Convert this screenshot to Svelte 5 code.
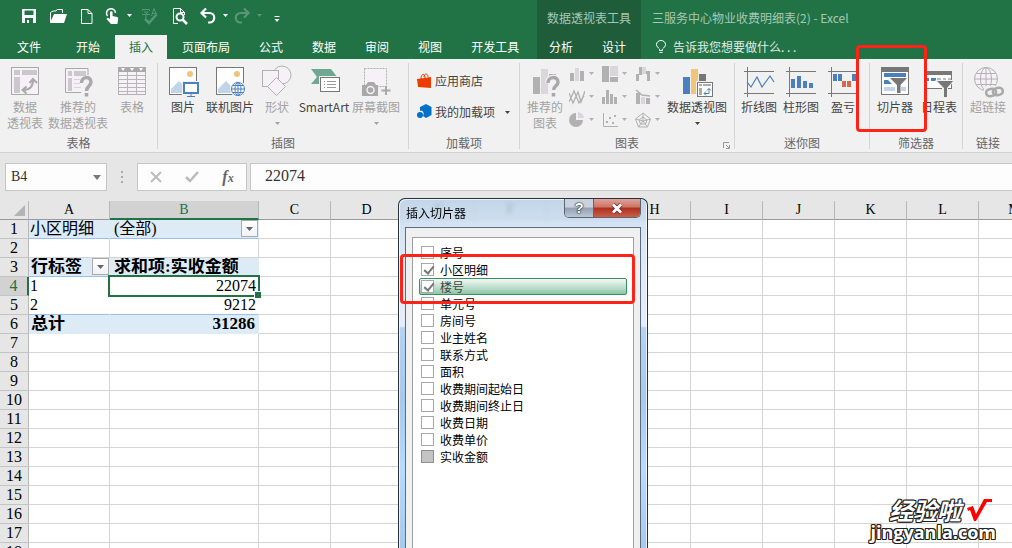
<script lang="ts">
  type Cell = { text?: string; cls?: string; filter?: boolean };

  const quickAccess = [
    { icon: 'save', label: '保存', w: 28 },
    { icon: 'open', label: '打开', w: 30 },
    { icon: 'new', label: '新建', w: 27 },
    { icon: 'touch', label: '触摸/鼠标模式', w: 24 },
    { icon: 'caret', label: '模式选项', w: 10 },
    { icon: 'spell', label: '拼写检查', w: 32, off: true },
    { icon: 'preview', label: '打印预览', w: 28 },
    { icon: 'undo', label: '撤消', w: 28 },
    { icon: 'caret', label: '撤消列表', w: 6 },
    { icon: 'redo', label: '恢复', w: 28, off: true },
    { icon: 'caret', label: '恢复列表', w: 6, off: true },
    { icon: 'customize', label: '自定义快速访问工具栏', w: 30 },
  ];

  const tabs = ['开始', '插入', '页面布局', '公式', '数据', '审阅', '视图', '开发工具'];
  const contextTabs = ['分析', '设计'];
  let activeTab = $state('插入');

  const miniCharts = ['column', 'treemap', 'waterfall', 'line', 'histogram', 'combo', 'pie', 'scatter', 'radar'];

  const columns = 'ABCDEFGHIJKLM'.split('');
  const rows = Array.from({ length: 18 }, (_, i) => i + 1);

  const cells: Record<string, Cell> = {
    A1: { text: '小区明细', cls: 'fill rule' },
    B1: { text: '(全部)', cls: 'fill rule indent', filter: true },
    A3: { text: '行标签', cls: 'fill rule bold', filter: true },
    B3: { text: '求和项:实收金额', cls: 'fill rule bold indent' },
    A4: { text: '1', cls: 'plain' },
    B4: { text: '22074', cls: 'plain num active' },
    A5: { text: '2', cls: 'plain rule' },
    B5: { text: '9212', cls: 'plain num rule' },
    A6: { text: '总计', cls: 'fill bold' },
    B6: { text: '31286', cls: 'fill bold num' },
  };

  let cellName = $state('B4');
  let formula = $state('22074');

  let fields = $state([
    { name: '序号', checked: false },
    { name: '小区明细', checked: true },
    { name: '楼号', checked: true },
    { name: '单元号', checked: false },
    { name: '房间号', checked: false },
    { name: '业主姓名', checked: false },
    { name: '联系方式', checked: false },
    { name: '面积', checked: false },
    { name: '收费期间起始日', checked: false },
    { name: '收费期间终止日', checked: false },
    { name: '收费日期', checked: false },
    { name: '收费单价', checked: false },
    { name: '实收金额', checked: false, disabled: true },
  ]);
  let selected = $state('楼号');
</script>

{#snippet caret()}
  <svg class="caret" width="5" height="3" viewBox="0 0 5 3"><path d="M0 0h5L2.5 3z" fill="currentColor" /></svg>
{/snippet}

{#snippet qatIcon(name: string)}
  {#if name === 'caret'}
    {@render caret()}
  {:else}
    <svg width="18" height="18" viewBox="0 0 18 18" fill="none" stroke="currentColor">
      {#if name === 'save'}
        <path d="M2 2h14v14H2z M4.500 3.500v4.500h9V3.500z M5 11v5h2v-3h2v3h4v-5z" fill="currentColor" fill-rule="evenodd" stroke="none" />
      {:else if name === 'open'}
        <path d="M1.500 15V5.500L4 4h3l1-1.500h5.500V6" />
        <path d="M1 16L5 7h13l-3 9z" fill="currentColor" stroke="none" />
      {:else if name === 'new'}
        <path d="M3.500 2.500h6.500l4 4v10H3.500z M10 2.500v4h4" />
      {:else if name === 'touch'}
        <path d="M4.500 9a4.500 4.500 0 1 1 8-3" stroke-width="1.500" />
        <path d="M7 5.500a1.300 1.300 0 0 1 2.600 0V9l4.400 1c1 .3 1.400 1 1.200 2l-.8 5H8L3.500 12c.8-1.300 2-1.200 3.500 0z" fill="currentColor" stroke="none" />
      {:else if name === 'spell'}
        <path d="M1.500 4V2.500h7V4M3 5h4L5 7v3.500H4M1 7.500h8M10.500 9L13 1.500 16 9M11.500 6.500h4" />
        <path d="M4 12l4 4 7-8" stroke-width="2.500" />
      {:else if name === 'preview'}
        <path d="M7 16.500H2.500v-15h7l4 4V8M9.500 1.500v4h4" />
        <circle cx="9" cy="10" r="3.500" stroke-width="2" />
        <path d="M11.500 12.500L16 17" stroke-width="2.500" />
      {:else if name === 'undo'}
        <path d="M7 1.500L2.500 6 7 10.500M3 6h7.500a4.700 4.700 0 0 1 0 9.500H9" stroke-width="2.200" />
      {:else if name === 'redo'}
        <path d="M11 1.500L15.500 6 11 10.500M15 6H7.500a4.700 4.700 0 0 0 0 9.500H9" stroke-width="2.200" />
      {:else if name === 'customize'}
        <path d="M6.500 9.500h5" /><path d="M6.500 12h5L9 15z" fill="currentColor" stroke="none" />
      {/if}
    </svg>
  {/if}
{/snippet}

{#snippet bigIcon(name: string)}
  <svg class="big-icon" width="32" height="32" viewBox="0 0 32 32" fill="none">
    {#if name === 'pivot'}
      <rect x="2.500" y="2.500" width="27" height="27" fill="#f6f1f6" stroke="#a9a9a9" />
      <path d="M5 5h6v5H5zM13 5h15v5H13zM5 12h6v16H5z" fill="#cbc8cb" />
      <path d="M14 25c6 0 10-3 10-10M20.500 18l3.500-4 4 4M17.500 21.500L13.500 25l4 3.500" stroke="#a9a9a9" stroke-width="2" />
    {:else if name === 'recPivot'}
      <path d="M26 10V3.500H3.500v24H19" fill="#f6f1f6" stroke="#a9a9a9" />
      <path d="M6 6h4v5H6zM12 6h12v5H12zM6 13h4v13H6z" fill="#cbc8cb" />
      <path d="M12 14.500h6M12 18.500h6M12 22.500h7" stroke="#d8d5d8" stroke-width="1" />
      <path d="M19.500 18c0-7 9.500-7 9.500-1 0 4-4.500 4-4.500 9M24.500 28v3.500" stroke="#a9a9a9" stroke-width="3.500" />
    {:else if name === 'table'}
      <rect x="2.500" y="2.500" width="27" height="27" fill="#f6f1f6" stroke="#b1b1b1" />
      <path d="M2 2h28v5H2z" fill="#a9a9a9" />
      <path d="M5 3h4L7 6zM14 3h4l-2 3zM23 3h4l-2 3z" fill="#fff" />
      <path d="M3 10.500h26M3 14.500h26M3 18.500h26M3 22.500h26M3 26.500h26M11.500 7v22M20.500 7v22" stroke="#b9b6b9" />
    {:else if name === 'picture' || name === 'online'}
      <rect x="2.500" y="2.500" width="27" height="27" fill="#fff" stroke="#777" />
      <path d="M4 28V24l8-8 5 5 2-1v8z" fill="#c0d4ea" />
      <circle cx="23" cy="9" r="3" fill="#eec57a" />
      {#if name === 'picture'}
        <path d="M15 16h17v16H15z" fill="#f1f1f1" />
        <rect x="17" y="18" width="14" height="10" fill="#fff" stroke="#4a80bb" stroke-width="2" />
        <path d="M24 28v3M20 31.500h8" stroke="#4a80bb" />
      {:else}
        <circle cx="24" cy="24" r="8" fill="#f1f1f1" />
        <circle cx="24" cy="24" r="6.500" fill="#fff" stroke="#4a80bb" />
        <path d="M17.500 24h13M19 20.500h10M19 27.500h10M24 17.500v13" stroke="#4a80bb" />
        <ellipse cx="24" cy="24" rx="3" ry="6.500" stroke="#4a80bb" />
      {/if}
    {:else if name === 'shapes'}
      <circle cx="21" cy="10" r="9" fill="#f6f1f6" stroke="#b1b1b1" />
      <rect x="1.500" y="5.500" width="16" height="16" fill="#f6f1f6" stroke="#b1b1b1" />
      <path d="M15.500 12.500l9 9-9 9-9-9z" fill="#f6f1f6" stroke="#b1b1b1" />
    {:else if name === 'smartart'}
      <path d="M3 4h20l7 9-5 6H3l6-7z" fill="#6fa793" />
      <rect x="11" y="11" width="21" height="17" fill="#f1f1f1" />
      <rect x="12.500" y="12.500" width="19" height="14" fill="#fff" stroke="#777" />
      <path d="M16 16.500h1M16 19.500h1M16 22.500h1M19 16.500h9M19 19.500h9M19 22.500h9" stroke="#999" />
    {:else if name === 'screenshot'}
      <path d="M4.500 3.500h22v18h-22z" fill="#f6f1f6" stroke="#b1b1b1" stroke-dasharray="2 1" />
      <path d="M2 20h4l2-3h6l2 3h2v11H2z" fill="#a9a9a9" />
      <circle cx="10.500" cy="25" r="3.500" stroke="#f1f1f1" stroke-width="1.500" />
      <path d="M26 21v9M21.500 25.500h9" stroke="#a9a9a9" stroke-width="2" />
    {:else if name === 'recChart'}
      <path d="M4 12h7v17H4z" fill="#b1b1b1" /><path d="M12 4h7v25h-7z" fill="#dbd6db" /><path d="M20 9h7v5h-7z" fill="#b1b1b1" />
      <path d="M19 18c0-7 10-7 10-1 0 4-4.500 4-4.500 8M24.500 27.500V32" stroke="#f1f1f1" stroke-width="6" />
      <path d="M19 18c0-7 10-7 10-1 0 4-4.500 4-4.500 8M24.500 28v3.500" stroke="#a9a9a9" stroke-width="3.500" />
    {:else if name === 'pivotChart'}
      <path d="M2 12h7v17H2z" fill="#4a80bb" /><path d="M10 4h7v25h-7z" fill="#eec57a" /><path d="M18 9h7v7h-7z" fill="#777" />
      <rect x="15" y="16" width="17" height="17" fill="#f1f1f1" />
      <rect x="16.500" y="17.500" width="15" height="14" fill="#fff" stroke="#777" />
      <path d="M18 19h3v2h-3zM22 19h8v2h-8zM18 23h3v7h-3z" fill="#aaa" />
      <path d="M23 28.500h5v-5M26 25.500l2-2 2 2M25 26.500l-2 2 2 2" stroke="#4a80bb" />
    {:else if name === 'sparkLine' || name === 'sparkColumn' || name === 'sparkWin'}
      <path d="M1 6.500h30M1 28.500h30M4.500 2v30" stroke="#777" />
      {#if name === 'sparkLine'}
        <path d="M4 17l4 5 6-10 5 10 8-11 4 6" stroke="#4a80bb" stroke-width="1.200" />
      {:else if name === 'sparkColumn'}
        <path d="M6 14h4v9H6zM12 11h4v12h-4zM18 16h4v7h-4zM24 18h4v5h-4z" fill="#4a80bb" />
      {:else}
        <path d="M6 9h4v7H6zM11 9h4v7h-4zM25 9h4v7h-4z" fill="#4a80bb" />
        <path d="M15 16h4v6h-4zM20 16h4v6h-4z" fill="#d9664c" />
      {/if}
    {:else if name === 'slicer'}
      <rect x="2.500" y="2.500" width="27" height="27" fill="#fff" stroke="#777" />
      <path d="M2 2h28v5H2z" fill="#777" />
      <path d="M5 8h22v4H5zM5 15h10v4H5z" fill="#4a80bb" /><path d="M5 22h22v4H5z" fill="#c0d4ea" />
      <path d="M9 12h20v3l-7 7v7h-6v-7l-7-7z" fill="#fff" />
      <path d="M11 13h17l-6.500 7v8H18v-8z" fill="#777" />
    {:else if name === 'timeline'}
      <rect x="1.500" y="6.500" width="27" height="17" fill="#fff" stroke="#777" />
      <path d="M1 6h28v4H1z" fill="#777" />
      <path d="M3 13h3v3H3zM8 13h5v3H8z" fill="#4a80bb" /><path d="M14 13h4v3h-4zM20 13h3v3h-3zM25 13h3v3h-3z" fill="#bbb" />
      <path d="M12 15h20l-7 8v10h-6V23z" fill="#f1f1f1" />
      <path d="M14 16h16l-6 7v9h-3v-9z" fill="#777" />
    {:else if name === 'link'}
      <g stroke="#b1b1b1">
        <circle cx="14" cy="14" r="11.500" fill="#f6f1f6" />
        <path d="M2.500 14h23M4 8.500h20M4 19.500h20M14 2.500v23" /><ellipse cx="14" cy="14" rx="5.500" ry="11.500" />
      </g>
      <rect x="12" y="21" width="20" height="11" fill="#f1f1f1" />
      <rect x="14" y="24" width="10" height="7" rx="3.500" stroke="#a9a9a9" stroke-width="2.500" transform="rotate(-12 19 27)" />
      <rect x="21" y="23" width="10" height="7" rx="3.500" stroke="#a9a9a9" stroke-width="2.500" transform="rotate(-12 26 27)" />
    {/if}
  </svg>
{/snippet}

{#snippet miniIcon(name: string)}
  <svg width="16" height="16" viewBox="0 0 16 16" fill="none" stroke="#b1b1b1">
    {#if name === 'column'}
      <path d="M1 7h4v8H1zM11 5h4v10h-4z" fill="#b1b1b1" stroke="none" /><path d="M6 2h4v13H6z" fill="#dbd6db" stroke="none" />
    {:else if name === 'treemap'}
      <path d="M0 0h7v16H0z" fill="#b1b1b1" stroke="none" /><path d="M8 0h8v10H8z" fill="#dbd6db" stroke="none" /><path d="M8 11h8v5H8z" fill="#b1b1b1" stroke="none" />
    {:else if name === 'waterfall'}
      <path d="M1 8h3v7H1zM4 1h3v8H4zM11 5h4v10h-3V8h-1z" fill="#b1b1b1" stroke="none" /><path d="M7 1h4v7H7z" fill="#dbd6db" stroke="none" />
    {:else if name === 'line'}
      <path d="M0 4l4 10L9 3l3 10 4-11M0 13L5 2l5 12 5-7" stroke-width="1.300" />
    {:else if name === 'histogram'}
      <path d="M0 8h3v7H0zM4 1h3v14H4zM8 5h3v10H8zM12 8h3v7h-3z" fill="#b1b1b1" stroke="none" />
    {:else if name === 'combo'}
      <path d="M1 4h4v11H1zM11 9h4v6h-4z" fill="#b1b1b1" stroke="none" /><path d="M6 8h4v7H6z" fill="#dbd6db" stroke="none" /><path d="M1 1l6 5 8 1" stroke-width="1.500" />
    {:else if name === 'pie'}
      <path d="M7 1v7h7a7 7 0 1 1-7-7z" fill="#b1b1b1" stroke="none" /><path d="M9 0a7 7 0 0 1 6 6H9z" fill="#dbd6db" stroke="none" />
    {:else if name === 'scatter'}
      <path d="M1.500 1v13.500H16" /><path d="M4 9h2v2H4zM7 5h2v2H7zM10 10h2v2h-2zM12 3h2v2h-2z" fill="#b1b1b1" stroke="none" />
    {:else if name === 'radar'}
      <path d="M8 1l7.500 6-3 8h-9l-3-8zM8 5l4 3-1.500 4h-5L4 8zM8 1v8M.5 7L8 9l7.500-2M3.500 15L8 9l4.500 6" />
    {/if}
  </svg>
{/snippet}

{#snippet big(icon: string, lines: string[], width: string, off = false, drop = false)}
  <button class="big {width}" class:off>
    {@render bigIcon(icon)}
    {#each lines as line}
      <span>{line}</span>
    {/each}
    {#if drop}
      <span class="drop">{@render caret()}</span>
    {/if}
  </button>
{/snippet}

<div class="app">
  <header>
    <div class="head-main">
      <div class="qat">
        {#each quickAccess as item}
          <button class="qat-btn" class:off={item.off} style="width: {item.w}px" aria-label={item.label}>
            {@render qatIcon(item.icon)}
          </button>
        {/each}
      </div>
      <nav class="tabs">
        <button class="tab tab--file">文件</button>
        {#each tabs as tab}
          <button class="tab" class:active={tab === activeTab} onclick={() => (activeTab = tab)}>{tab}</button>
        {/each}
      </nav>
    </div>
    <div class="head-context">
      <div class="context-title">数据透视表工具</div>
      <nav class="tabs">
        {#each contextTabs as tab}
          <button class="tab" class:active={tab === activeTab} onclick={() => (activeTab = tab)}>{tab}</button>
        {/each}
      </nav>
    </div>
    <div class="head-right">
      <div class="doc-title">三服务中心物业收费明细表(2) - Excel</div>
      <label class="tell-me">
        <svg width="10" height="14" viewBox="0 0 10 14" fill="none" stroke="#fff">
          <path d="M3.500 10.500V9C2 7.500.5 6.500.5 4.500a4.500 4 0 0 1 9 0c0 2-1.500 3-3 4.500v1.500zM3.500 12.500h3" />
        </svg>
        <input type="text" aria-label="告诉我" placeholder="告诉我您想要做什么. . ." />
      </label>
    </div>
  </header>

  <div class="ribbon">
    <section class="group group--tables">
      <div class="group-body">
        {@render big('pivot', ['数据', '透视表'], 'w44', true)}
        {@render big('recPivot', ['推荐的', '数据透视表'], 'w62', true)}
        {@render big('table', ['表格'], 'w46', true)}
      </div>
      <div class="group-label">表格</div>
    </section>
    <section class="group group--illus">
      <div class="group-body">
        {@render big('picture', ['图片'], 'w36')}
        {@render big('online', ['联机图片'], 'w58')}
        {@render big('shapes', ['形状'], 'w36', true, true)}
        {@render big('smartart', ['SmartArt'], 'w58')}
        {@render big('screenshot', ['屏幕截图'], 'w46', true, true)}
      </div>
      <div class="group-label">插图</div>
    </section>
    <section class="group group--addins">
      <div class="group-body addins">
        <button class="small">
          <svg width="16" height="16" viewBox="0 0 16 16" fill="none">
            <path d="M0 6l14-2v11L1 14z" fill="#eb3c00" /><path d="M4 6c0-6 4-6 4-1M7 4c0-4 4-4 4 0" stroke="#eb3c00" />
          </svg>
          应用商店
        </button>
        <button class="small">
          <svg width="16" height="16" viewBox="0 0 16 16">
            <path d="M9 0l5.500 3v8L9 14l-3-2c2-4-1-6-3-5V3z" fill="#0072c6" /><circle cx="3" cy="11" r="3" fill="#0072c6" />
          </svg>
          我的加载项
          {@render caret()}
        </button>
      </div>
      <div class="group-label">加载项</div>
    </section>
    <section class="group group--charts">
      <div class="group-body">
        {@render big('recChart', ['推荐的', '图表'], 'w44', true)}
        <div class="mini-grid">
          {#each miniCharts as chart}
            <button class="mini" aria-label={chart}>{@render miniIcon(chart)}{@render caret()}</button>
          {/each}
        </div>
        {@render big('pivotChart', ['数据透视图'], 'w58', false, true)}
      </div>
      <div class="group-label">图表</div>
      <button class="launcher" aria-label="图表选项">
        <svg width="7" height="7" viewBox="0 0 7 7" fill="none" stroke="#999"><path d="M.5 6V.5H6M3 3l3 3M6.500 3v3.500H3" /></svg>
      </button>
    </section>
    <section class="group group--spark">
      <div class="group-body">
        {@render big('sparkLine', ['折线图'], 'w42')}
        {@render big('sparkColumn', ['柱形图'], 'w42')}
        {@render big('sparkWin', ['盈亏'], 'w42')}
      </div>
      <div class="group-label">迷你图</div>
    </section>
    <section class="group group--filters">
      <div class="group-body">
        {@render big('slicer', ['切片器'], 'w44')}
        {@render big('timeline', ['日程表'], 'w44')}
      </div>
      <div class="group-label">筛选器</div>
    </section>
    <section class="group group--links">
      <div class="group-body">
        {@render big('link', ['超链接'], 'w44', true)}
      </div>
      <div class="group-label">链接</div>
    </section>
  </div>

  <div class="formula-bar">
    <div class="name-box">
      <input type="text" aria-label="名称框" bind:value={cellName} />
      <button aria-label="名称列表"><svg width="8" height="5" viewBox="0 0 8 5"><path d="M0 0h8L4 5z" fill="#777" /></svg></button>
    </div>
    <svg class="grip" width="2" height="12" viewBox="0 0 2 12"><path d="M0 0h2v2H0zM0 5h2v2H0zM0 10h2v2H0z" fill="#aaa" /></svg>
    <div class="edit-btns">
      <button aria-label="取消">
        <svg width="12" height="12" viewBox="0 0 12 12" fill="none" stroke="#bbb" stroke-width="2"><path d="M1 1l10 10M11 1L1 11" /></svg>
      </button>
      <button aria-label="输入">
        <svg width="14" height="12" viewBox="0 0 14 12" fill="none" stroke="#bbb" stroke-width="2.500"><path d="M1 6l4 4 8-9" /></svg>
      </button>
      <button class="fx" aria-label="插入函数"><i>f<small>x</small></i></button>
    </div>
    <input class="formula" type="text" aria-label="编辑栏" bind:value={formula} />
  </div>

  <main class="sheet">
    <table>
      <colgroup>
        <col class="col-head" />
        {#each columns as c}
          <col class="col-{c === 'A' || c === 'B' ? c : 'x'}" />
        {/each}
      </colgroup>
      <thead>
        <tr>
          <th class="corner" aria-label="全选">
            <svg width="11" height="11" viewBox="0 0 11 11"><path d="M11 0v11H0z" fill="#b4b4b4" /></svg>
          </th>
          {#each columns as c}
            <th class:current={c === 'B'}>{c}</th>
          {/each}
        </tr>
      </thead>
      <tbody>
        {#each rows as r}
          <tr>
            <th class:current={r === 4}>{r}</th>
            {#each columns as c}
              {@const cell = cells[c + r]}
              <td class={cell?.cls}>
                {#if cell?.filter}
                  <div class="with-filter">
                    {cell.text}
                    <button class="filter" aria-label="筛选">
                      <svg width="7" height="4" viewBox="0 0 7 4"><path d="M0 0h7L3.500 4z" fill="#666" /></svg>
                    </button>
                  </div>
                {:else}
                  {cell?.text ?? ''}
                {/if}
              </td>
            {/each}
          </tr>
        {/each}
      </tbody>
    </table>
  </main>

  <div class="dialog" role="dialog" aria-label="插入切片器">
    <div class="dialog-head">
      <h2>插入切片器</h2>
      <div class="win-btns">
        <button class="help" aria-label="帮助">?</button>
        <button class="close" aria-label="关闭">
          <svg width="14" height="11" viewBox="0 0 14 11" fill="none">
            <path d="M3 1.500l8 8M11 1.500l-8 8" stroke="#6b3030" stroke-width="4.500" />
            <path d="M3 1.500l8 8M11 1.500l-8 8" stroke="#fff" stroke-width="2.800" />
          </svg>
        </button>
      </div>
    </div>
    <div class="dialog-body">
      <div class="field-list">
        {#each fields as field}
          <label class:selected={field.name === selected}>
            <input
              type="checkbox"
              bind:checked={field.checked}
              disabled={field.disabled}
              onchange={() => (selected = field.name)}
            />
            {field.name}
          </label>
        {/each}
      </div>
    </div>
  </div>

  <div class="mark mark--slicer"></div>
  <div class="mark mark--fields"></div>

  <div class="watermark">
    <div class="wm-top">
      经验啦
      <svg width="26" height="24" viewBox="0 0 26 24" fill="#f00"><path d="M1 10l6-2 3 8L18 1h8v3h-5L10 23H8L4 12l-2 1z" /></svg>
    </div>
    <div class="wm-url">jingyanla.com</div>
  </div>
</div>

<style>
  :global(body) {
    overflow: hidden;
  }

  .app {
    position: relative;
    display: flex;
    flex-direction: column;
    height: 100vh;
    overflow: hidden;
    background: #e6e6e6;
    color: #444;
    font: 12px/16px "Noto Sans CJK SC", sans-serif;
  }

  .app * { box-sizing: border-box; }

  button, input {
    font: inherit;
    color: inherit;
    background: none;
    border: none;
    padding: 0;
    margin: 0;
    outline: none;
  }

  svg { flex-shrink: 0; }

  /* title bar and tabs */
  header {
    display: flex;
    flex-shrink: 0;
    background: #217346;
    color: #fff;
  }

  .head-main, .head-context, .head-right {
    display: flex;
    flex-direction: column;
  }

  .head-main { width: 537px; }
  .head-context { width: 104px; background: #1e5c3a; }
  .head-right { flex: 1; padding-left: 11px; }

  .qat, .context-title, .doc-title {
    height: 35px;
  }

  .qat {
    display: flex;
    padding: 0 0 4px 15px;
  }

  .qat-btn {
    display: flex;
    align-items: center;
    justify-content: center;
  }

  .qat-btn.off { opacity: 0.25; }

  .context-title, .doc-title {
    line-height: 36px;
    color: #a6c7b5;
    white-space: nowrap;
  }

  .context-title { text-align: center; }

  .tabs {
    display: flex;
    gap: 1px;
    height: 24px;
  }

  .tab {
    padding: 0 14px;
    white-space: nowrap;
  }

  .tab--file { padding: 0 20px 0 17px; }

  .head-context .tab { padding: 0 16px 0 12px; }

  .tab.active {
    background: #f1f1f1;
    color: #217346;
  }

  .tell-me {
    display: flex;
    align-items: center;
    gap: 7px;
    height: 24px;
    padding-left: 4px;
  }

  .tell-me input { flex: 1; }
  .tell-me input::placeholder { color: #e0ece5; opacity: 1; }

  /* ribbon */
  .ribbon {
    display: flex;
    flex-shrink: 0;
    padding: 4px 0 3px;
    background: #f1f1f1;
    border-bottom: 1px solid #d2d2d2;
  }

  .group {
    position: relative;
    display: flex;
    flex-direction: column;
    flex-shrink: 0;
    border-right: 1px solid #d5d5d5;
  }

  .group--tables { width: 158px; }
  .group--illus { width: 251px; }
  .group--addins { width: 111px; }
  .group--charts { width: 215px; }
  .group--spark { width: 135px; }
  .group--filters { width: 93px; }
  .group--links { width: 50px; border-right: none; }

  .group-body {
    display: flex;
    height: 72px;
    padding: 2px 0 0 3px;
  }

  .group--illus .group-body { padding-left: 7px; }

  .group-label {
    height: 14px;
    line-height: 16px;
    text-align: center;
    color: #666;
  }

  .big {
    display: flex;
    flex-direction: column;
    align-items: center;
    flex-shrink: 0;
    white-space: nowrap;
  }

  .big-icon { margin-bottom: 2px; overflow: visible; }

  .big.off { color: #a3a3a3; }

  .drop {
    display: flex;
    align-items: center;
    height: 16px;
  }

  .w36 { width: 36px; }
  .w42 { width: 42px; }
  .w44 { width: 44px; }
  .w46 { width: 46px; }
  .w58 { width: 58px; }
  .w62 { width: 62px; }

  .group-body.addins {
    flex-direction: column;
    gap: 11px;
    padding: 8px 0 0 8px;
  }

  .small {
    display: flex;
    align-items: center;
    height: 20px;
    gap: 2px;
    white-space: nowrap;
  }

  .small .caret { margin-left: 8px; }

  .mini-grid {
    display: grid;
    grid-template-columns: repeat(3, 33px);
    grid-auto-rows: 23px;
    padding-left: 2px;
    margin-top: -3px;
  }

  .mini {
    display: flex;
    align-items: center;
    gap: 4px;
    color: #b1b1b1;
  }

  .launcher {
    position: absolute;
    right: 4px;
    bottom: 0;
    line-height: 0;
  }

  /* formula bar */
  .formula-bar {
    display: flex;
    align-items: center;
    flex-shrink: 0;
    height: 48px;
    padding: 0 0 0 5px;
    font-family: "Liberation Serif", "Noto Sans CJK SC", serif;
    color: #333;
  }

  .name-box, .edit-btns, .formula {
    height: 28px;
    background: #fdfdfd;
    border: 1px solid #c6c6c6;
  }

  .name-box {
    display: flex;
    align-items: center;
    width: 102px;
    padding: 0 5px;
    font-size: 14px;
  }

  .name-box input { flex: 1; min-width: 0; }
  .name-box button { line-height: 0; }

  .grip { margin: 0 14px; }

  .edit-btns {
    display: flex;
    align-items: center;
    width: 110px;
    margin-right: 3px;
  }

  .edit-btns button {
    display: flex;
    flex: 1;
    justify-content: center;
  }

  .fx { font-size: 16px; font-weight: bold; color: #666; }
  .fx small { font-size: 12px; }

  .formula {
    flex: 1;
    min-width: 0;
    padding: 0 14px 2px;
    border-right: none;
    font-size: 16px;
  }

  /* worksheet */
  .sheet {
    flex: 1;
    min-height: 0;
    overflow: hidden;
    background: #fff;
  }

  table {
    width: 1051px;
    table-layout: fixed;
    border-spacing: 0;
    font: 16px/18px "Liberation Serif", "Noto Sans CJK SC", serif;
    color: #000;
  }

  .col-head { width: 29px; }
  .col-A { width: 81px; }
  .col-B { width: 149px; }
  .col-x { width: 72px; }

  th, td {
    height: 19px;
    padding: 0;
    overflow: hidden;
    white-space: nowrap;
  }

  th {
    font-weight: normal;
    background: #e6e6e6;
    border-right: 1px solid #b8b8b8;
    border-bottom: 1px solid #c4c4c4;
  }

  thead th { font-size: 14px; border-bottom-color: #999; }

  .corner { line-height: 0; text-align: right; vertical-align: bottom; padding: 0 3px 3px 0; }

  th.current { background: #d2d2d2; color: #217346; }
  thead th.current { border-bottom: 2px solid #217346; line-height: 17px; }
  tbody th.current { border-right: 2px solid #217346; }

  td {
    background: #fff;
    padding-left: 1px;
    border-right: 1px solid #d4d4d4;
    border-bottom: 1px solid #d4d4d4;
  }

  td.fill { background: #ddebf7; border-color: #ddebf7; }
  td.plain { border-color: #fff; }
  td.rule { border-bottom-color: #9bc2e6; }
  td.bold { font-weight: bold; font-size: 17px; padding-left: 2px; }
  td.indent { padding-left: 4px; }
  td.num { text-align: right; padding-right: 2px; }
  td.bold.num { padding-right: 3px; }

  td.active {
    position: relative;
    overflow: visible;
  }

  td.active::before {
    content: "";
    position: absolute;
    inset: -2px;
    border: 2px solid #217346;
  }

  td.active::after {
    content: "";
    position: absolute;
    right: -3px;
    bottom: -3px;
    width: 6px;
    height: 6px;
    background: #217346;
    border: solid #fff;
    border-width: 1px 0 0 1px;
  }

  .with-filter {
    display: flex;
    justify-content: space-between;
    height: 18px;
  }

  .filter {
    display: flex;
    align-items: center;
    justify-content: center;
    width: 17px;
    height: 17px;
    background: linear-gradient(#fff, #f0f2f6);
    border: 1px solid #ababab;
  }

  /* insert slicers dialog */
  .dialog {
    position: absolute;
    top: 198px;
    bottom: 0;
    left: 398px;
    display: flex;
    flex-direction: column;
    width: 250px;
    padding: 0 6px;
    color: #000;
    background:
      linear-gradient(rgba(186, 208, 232, 0.8), rgba(206, 224, 243, 0.85) 28px, #dde9f6 60px, #e4eef9 127px, #b4d3f3 129px, #a9c9ea 200px, #b9dafa 270px, #a9c9ea);
    backdrop-filter: blur(2px);
    border: 1px solid #27313d;
    border-bottom: none;
    border-radius: 7px 7px 0 0;
    box-shadow: inset 1px 1px 0 rgba(255, 255, 255, 0.7), inset -1px 0 0 rgba(255, 255, 255, 0.7);
  }

  .dialog-head {
    display: flex;
    justify-content: space-between;
    height: 28px;
  }

  h2 {
    margin: 0;
    padding-left: 1px;
    font-size: 12px;
    font-weight: normal;
    line-height: 28px;
  }

  .win-btns {
    display: flex;
    height: 19px;
    border: 1px solid #5c6570;
    border-top: none;
    border-radius: 0 0 5px 5px;
    overflow: hidden;
  }

  .win-btns button {
    display: flex;
    align-items: center;
    justify-content: center;
  }

  .help {
    width: 28px;
    font: bold 15px/18px "Liberation Sans", sans-serif;
    color: #fff;
    text-shadow: 0 0 1px #223, 0 0 2px #223, 0 0 1px #223;
    background: linear-gradient(#c9d3df 45%, #929fb0 50%, #b9c9da);
  }

  .close {
    width: 47px;
    border-left: 1px solid #5c6570;
    background: linear-gradient(#dfa298, #cd7565 45%, #ae2f1c 50%, #c9604b);
  }

  .dialog-body {
    display: flex;
    flex: 1;
    padding: 9px 6px 0;
    background: #f0f0f0;
    border: 1px solid #5b6c80;
    border-bottom: none;
  }

  .field-list {
    flex: 1;
    padding: 6px;
    background: #fff;
    border: 1px solid #a0a0a0;
    border-bottom: none;
  }

  .field-list label {
    display: flex;
    align-items: center;
    gap: 6px;
    height: 17px;
    padding-left: 1px;
    border: 1px solid transparent;
    border-radius: 2px;
    line-height: 15px;
  }

  .field-list label.selected {
    color: #444;
    background: linear-gradient(#f2f8f5, #b9dcc9 60%, #8fc5a8);
    border-color: #3c8f63;
  }

  .field-list input {
    position: relative;
    flex-shrink: 0;
    width: 13px;
    height: 13px;
    appearance: none;
    background: #fff;
    border: 1px solid #a8a8a8;
  }

  .field-list input:checked::after {
    content: "";
    position: absolute;
    top: 0;
    left: 4px;
    width: 4px;
    height: 8px;
    border: solid #777;
    border-width: 0 2px 2px 0;
    transform: rotate(40deg);
  }

  .field-list input:disabled { background: #c3c3c3; border-color: #8e8e8e; }

  /* highlight frames */
  .mark {
    position: absolute;
    border: 3px solid #ff2216;
    border-radius: 4px;
    pointer-events: none;
  }

  .mark--slicer { top: 45px; left: 856px; width: 71px; height: 87px; }
  .mark--fields { top: 254px; left: 400px; width: 235px; height: 50px; }

  .watermark {
    position: absolute;
    right: 16px;
    bottom: 6px;
    color: #fff;
    font-weight: bold;
    text-shadow: 1px 0 #222, -1px 0 #222, 0 1px #222, 0 -1px #222, 1px 1px #222, -1px -1px #222, 1px -1px #222, -1px 1px #222;
  }

  .wm-top {
    display: flex;
    justify-content: flex-end;
    gap: 5px;
    padding-right: 4px;
    font-size: 24px;
    line-height: 24px;
    font-style: italic;
  }

  .wm-url {
    font: bold 18px/20px "Open Sans", sans-serif;
    text-align: right;
  }
</style>
